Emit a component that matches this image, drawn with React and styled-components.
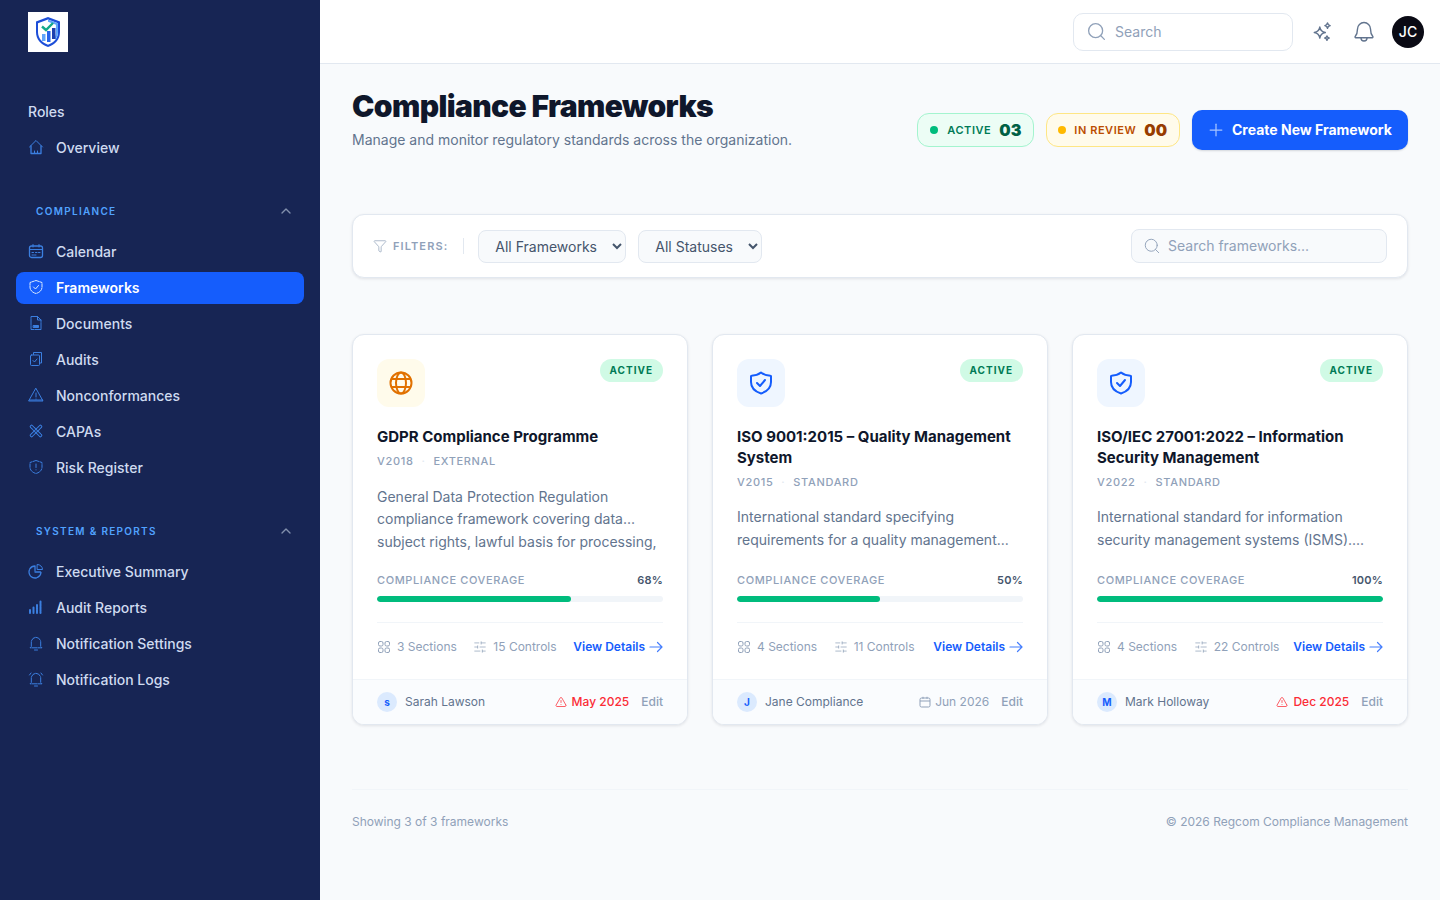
import styled, { createGlobalStyle } from "styled-components";
import { ChevronUp, Funnel, Plus, Search, SlidersHorizontal, TriangleAlert } from "lucide-react";

const GlobalStyle = createGlobalStyle`
  html, body { margin: 0; padding: 0; height: 100%; }
  body { font-family: Inter, "Liberation Sans", sans-serif; background: #f8fafc; color: #0f172a; }
  * { box-sizing: border-box; }
`;

const Shell = styled.div`
  display: flex;
  min-height: 900px;
`;

const Sidebar = styled.aside`
  width: 320px;
  flex-shrink: 0;
  background: #172554;
  padding: 12px 16px 0;
`;

const LogoBox = styled.div`
  width: 40px;
  height: 40px;
  margin-left: 12px;
  background: #fff;
  display: flex;
  align-items: center;
  justify-content: center;
`;

const RolesLabel = styled.div`
  margin: 42px 0 2px 12px;
  height: 36px;
  font-size: 14px;
  font-weight: 500;
  line-height: 36px;
  color: #cfdbf0;
`;

const NavList = styled.nav`
  display: flex;
  flex-direction: column;
  gap: 4px;
`;

const NavItem = styled.a`
  display: flex;
  align-items: center;
  gap: 12px;
  height: 32px;
  padding: 0 12px 2px;
  border-radius: 8px;
  font-size: 14px;
  font-weight: ${({ $active }) => ($active ? 600 : 500)};
  color: ${({ $active }) => ($active ? "#fff" : "#cfdbf0")};
  background: ${({ $active }) => ($active ? "#155dfc" : "transparent")};
  svg { flex-shrink: 0; }
`;

const SectionHead = styled.div`
  display: flex;
  align-items: center;
  justify-content: space-between;
  height: 16px;
  margin: 39px 0 17px;
  padding: 0 10px 0 20px;
  font-size: 10px;
  font-weight: 600;
  letter-spacing: 0.13em;
  color: #51a2ff;
  svg { color: #8290ad; }
`;

const Main = styled.div`
  flex: 1;
  min-width: 0;
  display: flex;
  flex-direction: column;
`;

const TopBar = styled.header`
  height: 64px;
  background: #fff;
  border-bottom: 1px solid #e2e8f0;
  display: flex;
  align-items: center;
  justify-content: flex-end;
  padding: 0 16px 0 0;
`;

const TopSearch = styled.label`
  width: 220px;
  height: 38px;
  display: flex;
  align-items: center;
  gap: 8px;
  padding: 0 12px;
  background: #fff;
  border: 1px solid #e2e8f0;
  border-radius: 10px;
  color: #90a1b9;
  margin-right: 19px;
`;

const TopSearchInput = styled.input`
  border: 0;
  outline: 0;
  padding: 0;
  min-width: 0;
  flex: 1;
  background: transparent;
  font: 400 14px Inter, sans-serif;
  color: #0f172a;
  &::placeholder { color: #90a1b9; opacity: 1; }
`;

const TopIcon = styled.button`
  width: 20px;
  height: 20px;
  padding: 0;
  border: 0;
  background: none;
  color: #62748e;
  margin-right: ${({ $gap }) => $gap}px;
  display: flex;
  align-items: center;
  justify-content: center;
  svg { flex-shrink: 0; }
`;

const Avatar = styled.div`
  width: 32px;
  height: 32px;
  border-radius: 50%;
  background: #0a0a14;
  color: #fff;
  font-size: 14px;
  font-weight: 500;
  display: flex;
  align-items: center;
  justify-content: center;
`;

const Content = styled.main`
  padding: 24px 32px 0;
`;

const PageHead = styled.div`
  display: flex;
  align-items: flex-end;
  justify-content: space-between;
`;

const Title = styled.h1`
  margin: 0;
  font-size: 30px;
  line-height: 36px;
  font-weight: 900;
  letter-spacing: -0.61px;
  color: #0f172b;
`;

const Subtitle = styled.p`
  margin: 6px 0 0;
  font-size: 14px;
  line-height: 20px;
  color: #62748e;
`;

const HeadActions = styled.div`
  display: flex;
  align-items: center;
  gap: 12px;
`;

const StatPill = styled.div`
  height: 34px;
  display: flex;
  align-items: center;
  gap: 8px;
  padding: 0 12px 0 ${({ $amber }) => ($amber ? 11 : 12)}px;
  border-radius: 12px;
  border: 1px solid ${({ $amber }) => ($amber ? "#fee685" : "#a4f4cf")};
  background: ${({ $amber }) => ($amber ? "#fffbeb" : "#ecfdf5")};
`;

const StatDot = styled.span`
  width: 8px;
  height: 8px;
  border-radius: 50%;
  margin-right: ${({ $amber }) => ($amber ? 0 : 1)}px;
  background: ${({ $amber }) => ($amber ? "#ffb900" : "#00bc7d")};
`;

const StatLabel = styled.span`
  font-size: 11px;
  font-weight: 600;
  letter-spacing: 0.05em;
  color: ${({ $amber }) => ($amber ? "#bb4d00" : "#007a55")};
`;

const StatValue = styled.span`
  font-size: 16px;
  font-weight: 900;
  color: ${({ $amber }) => ($amber ? "#973c00" : "#006045")};
`;

const CreateButton = styled.button`
  height: 40px;
  width: 216px;
  display: flex;
  align-items: center;
  gap: 6px;
  padding: 0 0 1px 14px;
  border: 0;
  border-radius: 10px;
  background: #155dfc;
  color: #fff;
  font: 700 14px Inter, sans-serif;
  box-shadow: 0 1px 2px rgba(15, 23, 42, 0.15);
  svg { color: #a6c4ff; }
`;

const FilterBar = styled.section`
  margin-top: 64px;
  height: 64px;
  display: flex;
  align-items: center;
  padding: 0 20px;
  background: #fff;
  border: 1px solid #e2e8f0;
  border-radius: 12px;
  box-shadow: 0 1px 3px rgba(15, 23, 42, 0.1);
`;

const FilterLabel = styled.div`
  display: flex;
  align-items: center;
  gap: 6px;
  font-size: 11px;
  font-weight: 600;
  letter-spacing: 0.1em;
  color: #90a1b9;
`;

const FilterDivider = styled.span`
  width: 1px;
  height: 16px;
  background: #e2e8f0;
  margin: 0 14px 0 15px;
`;

const Select = styled.select`
  height: 33px;
  padding: 0 4px 0 12px;
  margin-right: 12px;
  border: 1px solid #e2e8f0;
  border-radius: 8px;
  background: #f8fafc;
  font: 400 14px Inter, sans-serif;
  color: #45556c;
  width: ${({ $w }) => $w}px;
`;

const FilterSearch = styled.label`
  margin-left: auto;
  width: 256px;
  height: 34px;
  display: flex;
  align-items: center;
  gap: 7px;
  padding: 0 11px;
  border: 1px solid #e2e8f0;
  border-radius: 8px;
  background: #f8fafc;
  color: #90a1b9;
`;

const FilterInput = styled(TopSearchInput)`
  padding-bottom: 2px;
`;

const CardGrid = styled.section`
  margin-top: 56px;
  display: grid;
  grid-template-columns: repeat(3, 336px);
  gap: 24px;
`;

const Card = styled.article`
  height: 391px;
  display: flex;
  flex-direction: column;
  background: #fff;
  border: 1px solid #e2e8f0;
  border-radius: 12px;
  box-shadow: 0 1px 3px rgba(15, 23, 42, 0.1);
  overflow: hidden;
`;

const CardBody = styled.div`
  flex: 1;
  display: flex;
  flex-direction: column;
  padding: 24px 24px 0;
`;

const CardTop = styled.div`
  display: flex;
  align-items: flex-start;
  justify-content: space-between;
`;

const IconTile = styled.div`
  width: 48px;
  height: 48px;
  border-radius: 12px;
  display: flex;
  align-items: center;
  justify-content: center;
  background: ${({ $amber }) => ($amber ? "#fffbeb" : "#eff6ff")};
  color: ${({ $amber }) => ($amber ? "#e17100" : "#155dfc")};
`;

const Badge = styled.span`
  height: 23px;
  line-height: 23px;
  padding: 0 10px;
  border-radius: 999px;
  background: #d0fae5;
  color: #007a55;
  font-size: 10px;
  font-weight: 700;
  letter-spacing: 0.1em;
`;

const CardTitle = styled.h3`
  margin: 20px 0 0;
  font-size: 15px;
  line-height: 1.375;
  font-weight: 700;
  color: #0f172b;
`;

const CardMeta = styled.div`
  margin-top: 5.5px;
  display: flex;
  align-items: center;
  gap: 8px;
  font-size: 11px;
  line-height: 16px;
  font-weight: 500;
  letter-spacing: 0.06em;
  color: #90a1b9;
`;

const MetaDot = styled.span`
  color: #e2e8f0;
`;

const CardDesc = styled.p`
  margin: 16.5px 0 0;
  flex: 1;
  font-size: 14px;
  line-height: 22.75px;
  color: #62748e;
`;

const CoverageRow = styled.div`
  display: flex;
  justify-content: space-between;
  font-size: 11px;
  line-height: 16px;
  font-weight: 500;
  letter-spacing: 0.055em;
  color: #90a1b9;
`;

const CoveragePct = styled.span`
  font-weight: 600;
  letter-spacing: 0.02em;
  color: #45556c;
`;

const Track = styled.div`
  margin-top: 8px;
  height: 6px;
  border-radius: 999px;
  background: #f1f5f9;
  overflow: hidden;
`;

const Fill = styled.div`
  height: 100%;
  border-radius: 999px;
  background: #00bc7d;
`;

const StatsRow = styled.div`
  margin-top: 20px;
  height: 57px;
  padding-bottom: 9px;
  border-top: 1px solid #f1f5f9;
  display: flex;
  align-items: center;
  justify-content: space-between;
  font-size: 12px;
  color: #90a1b9;
`;

const StatGroup = styled.div`
  display: flex;
  align-items: center;
  gap: 16.5px;
`;

const StatItem = styled.span`
  display: flex;
  align-items: center;
  gap: 6px;
  white-space: nowrap;
`;

const ViewLink = styled.a`
  display: flex;
  align-items: center;
  gap: 4px;
  font-weight: 600;
  color: #155dfc;
  white-space: nowrap;
`;

const CardFoot = styled.footer`
  height: 45px;
  display: flex;
  align-items: center;
  padding: 0 24px 1px;
  border-top: 1px solid #f1f5f9;
  background: #fafcfe;
  font-size: 12px;
`;

const Owner = styled.span`
  display: flex;
  align-items: center;
  gap: 8px;
  color: #62748e;
`;

const OwnerDot = styled.span`
  width: 20px;
  height: 20px;
  border-radius: 50%;
  background: #dbeafe;
  color: #155dfc;
  font-size: 10px;
  font-weight: 700;
  display: flex;
  align-items: center;
  justify-content: center;
`;

const DueDate = styled.span`
  margin-left: auto;
  display: flex;
  align-items: center;
  gap: ${({ $late }) => ($late ? 5 : 4)}px;
  font-weight: ${({ $late }) => ($late ? 500 : 400)};
  color: ${({ $late }) => ($late ? "#fb2c36" : "#90a1b9")};
`;

const EditLink = styled.a`
  margin-left: 12px;
  font-weight: 500;
  color: #90a1b9;
`;

const PageFoot = styled.footer`
  margin-top: 64px;
  height: 65px;
  padding-bottom: 2px;
  border-top: 1px solid #f1f5f9;
  display: flex;
  align-items: center;
  justify-content: space-between;
  font-size: 12px;
  color: #90a1b9;
`;

// small line drawings for the sidebar, they sit on a 16px box
const NavIcon = ({ children, active }) => (
  <svg width="16" height="16" viewBox="0 0 16 16" fill="none" stroke={active ? "#dbeafe" : "#3b7fe0"} strokeWidth="1" strokeLinecap="round" strokeLinejoin="round">
    {children}
  </svg>
);

const icons = {
  home: <><path d="M1.500 8 8 1.500 14.500 8" /><path d="M3 6.800V14.500H13V6.800" strokeWidth="1.300" /><path d="M6.500 14v-2M9.500 14v-2" /></>,
  calendar: <><rect x="1.500" y="3" width="13" height="11.500" rx="2" strokeWidth="1.300" /><path d="M1.500 6.500h13M5 1.500V4M11 1.500V4" /><path d="M4 9.500h2M7.500 9.500h2M10.500 9.500h1.500M4 12h4" strokeDasharray="1.500 1" /></>,
  shield: <><path d="M8 1.500 14 3.500V8c0 3.500-2.600 5.600-6 6.500C4.600 13.600 2 11.500 2 8V3.500Z" strokeDasharray="3 1" /><path d="m5.500 8 2 2 3-3.500" /></>,
  file: <><path d="M3 1.500h6.500L13 5v9.500H3Z" strokeDasharray="6 1" /><path d="M9.500 1.500V5H13" /><path d="M5.500 10.500h5v2h-5Z" fill="#3b7fe0" /></>,
  audits: <><path d="M5.500 3.500V1.500h8v10.500h-2" /><rect x="2.500" y="4" width="9" height="10.500" rx="1" /><path d="m5 9.500 1.500 1.500 2.500-3" /></>,
  warn: <><path d="M8 1.500 15 14H1Z" /><path d="M8 6v4M8 12v.1M1.500 13h13" /></>,
  tools: <><rect x="6.700" y="0.500" width="2.600" height="15" rx="1" transform="rotate(45 8 8)" strokeDasharray="4 .8" /><rect x="6.700" y="0.500" width="2.600" height="15" rx="1" transform="rotate(-45 8 8)" strokeDasharray="4 .8" /></>,
  risk: <><path d="M8 1.500 14 3.500V8c0 3.500-2.600 5.600-6 6.500C4.600 13.600 2 11.500 2 8V3.500Z" strokeDasharray="3 1.200" /><path d="M8 5v3.500M8 10.800v.1" /></>,
  pie: <><path d="M7 3a6 6 0 1 0 6 6H7Z" strokeDasharray="6 1" strokeWidth="1.300" /><path d="M9.500 1.500a5 5 0 0 1 5 5h-5Z" /></>,
  bars: <><path d="M2 11v3M5.500 8.500V14M9 6v8M12.500 2.500V14" strokeWidth="2" strokeDasharray="2 .6" /></>,
  bell: <><path d="M3.300 11.500V7a4.700 4.700 0 0 1 9.400 0v4.500l1.300 1.300H2Z" strokeDasharray="5 1" /><path d="M6.500 15h3" /></>,
  logs: <><path d="M3.300 11.500V7a4.700 4.700 0 0 1 9.400 0v4.500l1.300 1.300H2Z" strokeDasharray="5 1" /><path d="M6.500 15h3M1.500 4 3 2M14.500 4 13 2" /></>,
};

const LogoMark = () => (
  <svg width="28" height="32" viewBox="0 0 28 32" fill="none">
    <path d="M14 1 26 5.500V16c0 7.500-5 12.500-12 15C7 28.500 2 23.500 2 16V5.500Z" fill="#1d4ed8" />
    <path d="M14 3.500 24 7.300V16c0 6.300-4.200 10.500-10 12.800C8.200 26.500 4 22.300 4 16V7.300Z" fill="#fff" />
    <path d="M14 3.500 24 7.300V16c0 3-1 5.600-2.600 7.700l-1-1.500c1-1.800 1.500-3.900 1.500-6.200V8.700L14 5.700Z" fill="#60a5fa" />
    <rect x="8" y="18" width="3.500" height="7" fill="#60a5fa" />
    <rect x="13" y="15" width="3.500" height="11" fill="#2563eb" />
    <rect x="18" y="12" width="3.500" height="11" fill="#1e40af" />
    <path d="m8 10.500 4 3.500 7-7" stroke="#14a98a" strokeWidth="2.400" />
  </svg>
);

const Sparkle = () => (
  <svg width="22" height="22" viewBox="0 0 20 20" fill="none" stroke="currentColor" strokeWidth="1.300" strokeLinejoin="round">
    <path d="M8 5.500c.6 3.300 1.700 4.400 5 5-3.300.6-4.400 1.700-5 5-.6-3.300-1.700-4.400-5-5 3.300-.6 4.400-1.700 5-5Z" />
    <path d="M15 1.800c.3 1.500.9 2.100 2.400 2.400-1.500.3-2.100.9-2.400 2.400-.3-1.500-.9-2.100-2.400-2.400 1.500-.3 2.100-.9 2.400-2.400Z" />
    <path d="M14.500 13.500c.25 1.300.7 1.750 2 2-1.300.25-1.750.7-2 2-.25-1.300-.7-1.750-2-2 1.300-.25 1.750-.7 2-2Z" />
  </svg>
);

const BellIcon = () => (
  <svg width="24" height="24" viewBox="0 0 24 24" fill="none" stroke="currentColor" strokeWidth="1.400" strokeLinecap="round" strokeLinejoin="round">
    <path d="M12 2.500a6.500 6.500 0 0 0-6.500 6.500c0 4.500-1.200 6.200-2.300 7.500-.4.500-.1 1.300.6 1.300h16.400c.7 0 1-.8.600-1.300-1.100-1.300-2.300-3-2.300-7.500A6.500 6.500 0 0 0 12 2.500Z" />
    <path d="M9 18a3 3 0 0 0 6 0" />
  </svg>
);

const Globe = () => (
  <svg width="24" height="24" viewBox="0 0 24 24" fill="none" stroke="currentColor" strokeWidth="2">
    <circle cx="12" cy="12" r="10.500" />
    <ellipse cx="12" cy="12" rx="5" ry="10.500" />
    <path d="M2.600 8h18.800M2.600 16h18.800" />
  </svg>
);

const ShieldTick = () => (
  <svg width="24" height="24" viewBox="0 0 24 24" fill="none" stroke="currentColor" strokeWidth="2" strokeLinecap="round" strokeLinejoin="round">
    <path d="M12 1.500c2.500 2 5.500 3 9.500 3.200.4 0 .5.300.5.600V11c0 5.500-3.800 9.500-10 11.500C5.800 20.500 2 16.500 2 11V5.300c0-.3.100-.6.500-.6C6.500 4.500 9.500 3.500 12 1.500Z" />
    <path d="m8 12 3 3 5-6" />
  </svg>
);

const SectionsIcon = () => (
  <svg width="14" height="14" viewBox="0 0 14 14" fill="none" stroke="currentColor" strokeWidth="1">
    <rect x="1.500" y="1.500" width="4.500" height="4.500" rx="1.500" />
    <rect x="8" y="1.500" width="4.500" height="4.500" rx="1.500" />
    <rect x="1.500" y="8" width="4.500" height="4.500" rx="1.500" />
    <rect x="8" y="8" width="4.500" height="4.500" rx="1.500" />
  </svg>
);

const ArrowIcon = () => (
  <svg width="14" height="14" viewBox="0 0 14 14" fill="none" stroke="#155dfc" strokeOpacity="0.8" strokeWidth="1.200" strokeLinecap="round" strokeLinejoin="round">
    <path d="M1 7h12M8.500 2.500 13 7l-4.500 4.500" />
  </svg>
);

const CalendarSmall = () => (
  <svg width="12" height="12" viewBox="0 0 12 12" fill="none" stroke="currentColor" strokeWidth="1">
    <rect x="1" y="2" width="10" height="9" rx="1.500" />
    <path d="M1 5h10M4 .8v2M8 .8v2" />
  </svg>
);

const complianceNav = [
  ["calendar", "Calendar"],
  ["shield", "Frameworks", true],
  ["file", "Documents"],
  ["audits", "Audits"],
  ["warn", "Nonconformances"],
  ["tools", "CAPAs"],
  ["risk", "Risk Register"],
];

const reportNav = [
  ["pie", "Executive Summary"],
  ["bars", "Audit Reports"],
  ["bell", "Notification Settings"],
  ["logs", "Notification Logs"],
];

const frameworks = [
  {
    title: "GDPR Compliance Programme",
    version: "V2018",
    type: "EXTERNAL",
    desc: "General Data Protection Regulation compliance framework covering data... subject rights, lawful basis for processing,",
    pct: 68,
    sections: 3,
    controls: 15,
    owner: "Sarah Lawson",
    initial: "s",
    due: "May 2025",
    late: true,
    amber: true,
  },
  {
    title: "ISO 9001:2015 – Quality Management System",
    version: "V2015",
    type: "STANDARD",
    desc: "International standard specifying requirements for a quality management...",
    pct: 50,
    sections: 4,
    controls: 11,
    owner: "Jane Compliance",
    initial: "J",
    due: "Jun 2026",
  },
  {
    title: "ISO/IEC 27001:2022 – Information Security Management",
    version: "V2022",
    type: "STANDARD",
    desc: "International standard for information security management systems (ISMS)....",
    pct: 100,
    sections: 4,
    controls: 22,
    owner: "Mark Holloway",
    initial: "M",
    due: "Dec 2025",
    late: true,
  },
];

const NavRows = ({ items }) => (
  <NavList>
    {items.map(([icon, label, active]) => (
      <NavItem key={label} $active={active}>
        <NavIcon active={active}>{icons[icon]}</NavIcon>
        {label}
      </NavItem>
    ))}
  </NavList>
);

export default function App() {
  return (
    <Shell>
      <GlobalStyle />
      <Sidebar>
        <LogoBox>
          <LogoMark />
        </LogoBox>
        <RolesLabel>Roles</RolesLabel>
        <NavRows items={[["home", "Overview"]]} />
        <SectionHead>
          COMPLIANCE
          <ChevronUp size={16} />
        </SectionHead>
        <NavRows items={complianceNav} />
        <SectionHead>
          SYSTEM &amp; REPORTS
          <ChevronUp size={16} />
        </SectionHead>
        <NavRows items={reportNav} />
      </Sidebar>

      <Main>
        <TopBar>
          <TopSearch>
            <Search size={21} strokeWidth={1.5} />
            <TopSearchInput placeholder="Search" />
          </TopSearch>
          <TopIcon $gap={22}>
            <Sparkle />
          </TopIcon>
          <TopIcon $gap={18}>
            <BellIcon />
          </TopIcon>
          <Avatar>JC</Avatar>
        </TopBar>

        <Content>
          <PageHead>
            <div>
              <Title>Compliance Frameworks</Title>
              <Subtitle>Manage and monitor regulatory standards across the organization.</Subtitle>
            </div>
            <HeadActions>
              <StatPill>
                <StatDot />
                <StatLabel>ACTIVE</StatLabel>
                <StatValue>03</StatValue>
              </StatPill>
              <StatPill $amber>
                <StatDot $amber />
                <StatLabel $amber>IN REVIEW</StatLabel>
                <StatValue $amber>00</StatValue>
              </StatPill>
              <CreateButton>
                <Plus size={20} strokeWidth={1.5} />
                Create New Framework
              </CreateButton>
            </HeadActions>
          </PageHead>

          <FilterBar>
            <FilterLabel>
              <Funnel size={14} strokeWidth={1.25} />
              FILTERS:
            </FilterLabel>
            <FilterDivider />
            <Select $w={148}>
              <option>All Frameworks</option>
            </Select>
            <Select $w={124}>
              <option>All Statuses</option>
            </Select>
            <FilterSearch>
              <Search size={18} strokeWidth={1.25} />
              <FilterInput placeholder="Search frameworks..." />
            </FilterSearch>
          </FilterBar>

          <CardGrid>
            {frameworks.map((item) => (
              <Card key={item.title}>
                <CardBody>
                  <CardTop>
                    <IconTile $amber={item.amber}>
                      {item.amber ? <Globe /> : <ShieldTick />}
                    </IconTile>
                    <Badge>ACTIVE</Badge>
                  </CardTop>
                  <CardTitle>{item.title}</CardTitle>
                  <CardMeta>
                    {item.version}
                    <MetaDot>·</MetaDot>
                    {item.type}
                  </CardMeta>
                  <CardDesc>{item.desc}</CardDesc>
                  <CoverageRow>
                    COMPLIANCE COVERAGE
                    <CoveragePct>{item.pct}%</CoveragePct>
                  </CoverageRow>
                  <Track>
                    <Fill style={{ width: `${item.pct}%` }} />
                  </Track>
                  <StatsRow>
                    <StatGroup>
                      <StatItem>
                        <SectionsIcon />
                        {item.sections} Sections
                      </StatItem>
                      <StatItem>
                        <SlidersHorizontal size={14} strokeWidth={1.25} />
                        {item.controls} Controls
                      </StatItem>
                    </StatGroup>
                    <ViewLink>
                      View Details
                      <ArrowIcon />
                    </ViewLink>
                  </StatsRow>
                </CardBody>
                <CardFoot>
                  <Owner>
                    <OwnerDot>{item.initial}</OwnerDot>
                    {item.owner}
                  </Owner>
                  <DueDate $late={item.late}>
                    {item.late ? <TriangleAlert size={12} strokeWidth={1.5} /> : <CalendarSmall />}
                    {item.due}
                  </DueDate>
                  <EditLink>Edit</EditLink>
                </CardFoot>
              </Card>
            ))}
          </CardGrid>

          <PageFoot>
            <span>Showing 3 of 3 frameworks</span>
            <span>© 2026 Regcom Compliance Management</span>
          </PageFoot>
        </Content>
      </Main>
    </Shell>
  );
}
